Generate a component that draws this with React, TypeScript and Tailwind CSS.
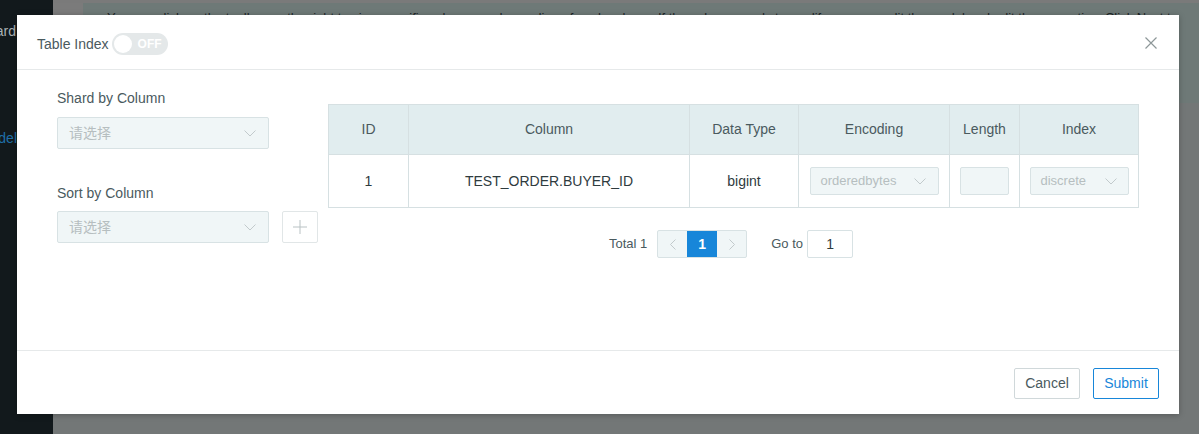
import React from "react";

const Chevron = ({ className = "" }: { className?: string }) => (
  <svg width="12" height="7" viewBox="0 0 12 7" className={className} fill="none">
    <path d="M0.5 0.5 L6 6 L11.5 0.5" stroke="#c2cacc" strokeWidth="1" />
  </svg>
);

const Select = ({ text, w }: { text: string; w: string }) => (
  <div className={`${w} h-[32px] flex items-center justify-between px-[11px] bg-[#f0f6f7] border border-[#d8e2e4] rounded-[2px]`}>
    <span className="text-[14px] text-[#b6bec0]" style={{ fontFamily: '"Liberation Sans","Noto Sans CJK SC",sans-serif' }}>{text}</span>
    <Chevron className="mr-[1px]" />
  </div>
);

export default function App() {
  const font = { fontFamily: '"Liberation Sans", Arial, "Noto Sans CJK SC", sans-serif' };
  return (
    <div className="relative w-[1199px] h-[434px] overflow-hidden bg-[#737777]" style={font}>
      {/* backdrop */}
      <div className="flex h-full">
        <div className="w-[53px] shrink-0 h-full bg-[#12191c] flex flex-col overflow-hidden">
          <div className="h-[52px] flex items-end justify-end pb-[10px] text-[14px] text-[#aab2b4] pr-[37px]">ard</div>
          <div className="h-[56px]" />
          <div className="h-[60px] flex items-center justify-end text-[14px] text-[#1f6fa8] pr-[36px]">del</div>
        </div>
        <div className="flex-1 min-w-0 flex flex-col">
          <div className="h-[3px] bg-[#7a7a7a]" />
          <div className="flex">
            <div className="w-[30px] shrink-0 bg-[#7b7b7b]" />
            <div className="flex-1 min-w-0 h-[100px] bg-[#6e7977] pl-[24px] pr-[2px] pt-[7px] text-[13px] leading-[16px] text-[#1c2426] overflow-hidden">
              You can click on the toolbar on the right to view specific columns and encoding of each column. If the column needs to modify, you can edit the model and edit the properties. Click Next to complete
            </div>
          </div>
        </div>
      </div>

      {/* modal */}
      <div className="absolute left-[17px] top-[15px] w-[1162px] h-[399px] bg-white shadow-[0_1px_6px_rgba(0,0,0,0.25)] flex flex-col">
        <div className="h-[55px] shrink-0 border-b border-[#e6e9ea] flex items-center justify-between pl-[20px] pr-[22px]">
          <div className="flex items-center gap-[3px] pt-[4px]">
            <span className="text-[14px] text-[#4a5a5e]">Table Index</span>
            <div className="w-[56px] h-[22px] rounded-full bg-[#e4e8e9] flex items-center pl-[2px]">
              <div className="w-[18px] h-[18px] rounded-full bg-white" />
              <span className="ml-[6px] text-[12px] text-white font-bold">OFF</span>
            </div>
          </div>
          <svg width="12" height="12" viewBox="0 0 12 12" className="mt-[1px]">
            <path d="M0.5 0.5 L11.5 11.5 M11.5 0.5 L0.5 11.5" stroke="#8d9799" strokeWidth="1.2" />
          </svg>
        </div>

        <div className="flex-1 flex pl-[40px] pt-[20px]">
          <div className="w-[271px] shrink-0 flex flex-col">
            <div className="text-[14px] text-[#4a5a5e] leading-[16px]">Shard by Column</div>
            <div className="mt-[11px]"><Select text="请选择" w="w-[212px]" /></div>
            <div className="text-[14px] text-[#4a5a5e] leading-[16px] mt-[36px]">Sort by Column</div>
            <div className="mt-[10px] flex items-center gap-[13px]">
              <Select text="请选择" w="w-[212px]" />
              <div className="w-[36px] h-[32px] border border-[#e1e6e7] rounded-[2px] flex items-center justify-center">
                <svg width="14" height="14" viewBox="0 0 14 14">
                  <path d="M7 0 V14 M0 7 H14" stroke="#b9c2c4" strokeWidth="1" />
                </svg>
              </div>
            </div>
          </div>

          <div className="flex flex-col items-center">
            <div className="mt-[14px] w-[811px] border border-[#d6e0e2] text-[14px] text-[#4a5a5e]">
              <div className="flex h-[50px] bg-[#e1edef] border-b border-[#d6e0e2]">
                <div className="w-[80px] flex items-center justify-center border-r border-[#d6e0e2]">ID</div>
                <div className="w-[281px] flex items-center justify-center border-r border-[#d6e0e2]">Column</div>
                <div className="w-[109px] flex items-center justify-center border-r border-[#d6e0e2]">Data Type</div>
                <div className="w-[151px] flex items-center justify-center border-r border-[#d6e0e2]">Encoding</div>
                <div className="w-[70px] flex items-center justify-center border-r border-[#d6e0e2]">Length</div>
                <div className="flex-1 flex items-center justify-center">Index</div>
              </div>
              <div className="flex h-[52px] text-[#2f3b3e]">
                <div className="w-[80px] flex items-center justify-center border-r border-[#d6e0e2]">1</div>
                <div className="w-[281px] flex items-center justify-center border-r border-[#d6e0e2]">TEST_ORDER.BUYER_ID</div>
                <div className="w-[109px] flex items-center justify-center border-r border-[#d6e0e2]">bigint</div>
                <div className="w-[151px] flex items-center justify-center border-r border-[#d6e0e2]">
                  <div className="w-[129px] h-[28px] bg-[#f0f6f7] border border-[#d8e2e4] rounded-[2px] flex items-center justify-between pl-[10px] pr-[12px]">
                    <span className="text-[13px] text-[#b6bec0]">orderedbytes</span>
                    <Chevron />
                  </div>
                </div>
                <div className="w-[70px] flex items-center justify-center border-r border-[#d6e0e2]">
                  <div className="w-[49px] h-[28px] bg-[#f0f6f7] border border-[#d8e2e4] rounded-[2px]" />
                </div>
                <div className="flex-1 flex items-center justify-center">
                  <div className="w-[99px] h-[28px] bg-[#f0f6f7] border border-[#d8e2e4] rounded-[2px] flex items-center justify-between pl-[10px] pr-[11px]">
                    <span className="text-[13px] text-[#b6bec0]">discrete</span>
                    <Chevron />
                  </div>
                </div>
              </div>
            </div>

            <div className="mt-[22px] flex items-center text-[13px] text-[#4a5a5e] -ml-[5px]">
              <span className="mr-[10px]">Total 1</span>
              <div className="flex h-[28px] border border-[#d8e2e4] rounded-[2px] bg-[#f0f6f7]">
                <div className="w-[29px] flex items-center justify-center">
                  <svg width="6" height="11" viewBox="0 0 6 11"><path d="M5.5 0.5 L0.5 5.5 L5.5 10.5" stroke="#c2cacc" fill="none" /></svg>
                </div>
                <div className="w-[30px] bg-[#1786d9] text-white font-bold text-[14px] flex items-center justify-center">1</div>
                <div className="w-[29px] flex items-center justify-center">
                  <svg width="6" height="11" viewBox="0 0 6 11"><path d="M0.5 0.5 L5.5 5.5 L0.5 10.5" stroke="#c2cacc" fill="none" /></svg>
                </div>
              </div>
              <span className="ml-[24px] mr-[4px]">Go to</span>
              <div className="w-[46px] h-[28px] border border-[#d8e2e4] rounded-[2px] flex items-center justify-center text-[14px] text-[#2f3b3e]">1</div>
            </div>
          </div>
        </div>

        <div className="h-[64px] shrink-0 border-t border-[#e6e9ea] flex items-center justify-end pr-[20px] gap-[13px] pt-[1px]">
          <div className="w-[66px] h-[31px] border border-[#d0d8da] rounded-[2px] flex items-center justify-center text-[14px] text-[#4a5a5e]">Cancel</div>
          <div className="w-[66px] h-[31px] border border-[#1786d9] rounded-[2px] flex items-center justify-center text-[14px] text-[#1786d9]">Submit</div>
        </div>
      </div>
    </div>
  );
}
